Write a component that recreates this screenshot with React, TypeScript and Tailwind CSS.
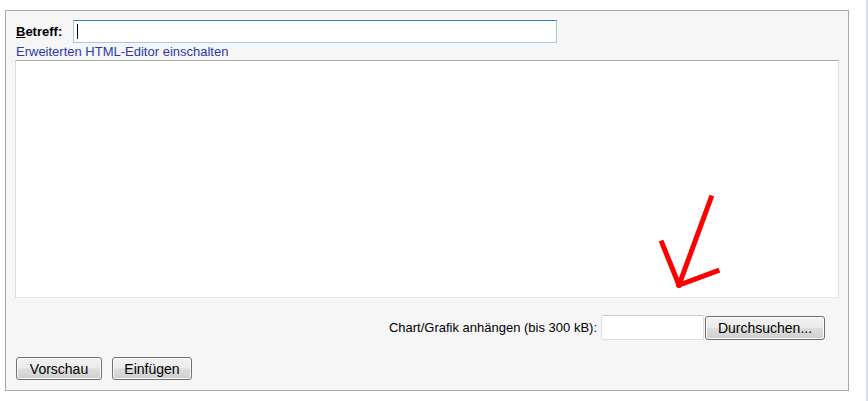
import type { ReactNode } from "react";

const font = { fontFamily: '"Liberation Sans", Arial, sans-serif' };

function WinButton({ children, className = "" }: { children: ReactNode; className?: string }) {
  return (
    <button
      type="button"
      className={`flex items-center justify-center rounded-[3px] border border-[#707070] bg-[linear-gradient(to_bottom,#f2f2f2_0%,#ebebeb_48%,#dddddd_52%,#cfcfcf_100%)] text-[14px] leading-none text-black shadow-[inset_0_0_0_1px_#fcfcfc] ${className}`}
    >
      {children}
    </button>
  );
}

export default function App() {
  return (
    <div className="relative flex h-[401px] w-[868px] bg-white text-[13px] text-black" style={font}>
      <div className="w-[866px] pl-[5px] pt-[10px]">
        <div className="flex h-[381px] w-[844px] flex-col border border-[#a9a9a9] bg-[#f6f6f6] pl-[9px]">
          {/* subject line */}
          <div className="mt-[9px] flex items-center">
            <label className="w-[58px] pl-[1px] text-[13px] font-bold">
              <span className="underline">B</span>etreff:
            </label>
            <div className="relative h-[23px] w-[484px] border border-[#a4c9e3] border-t-[#3d7bad] bg-white">
              <span className="absolute left-[3px] top-[3px] h-[15px] w-px bg-black" />
            </div>
          </div>
          <a className="mt-px pl-[1px] text-[13px] leading-[15px] text-[#2b3ca8]">Erweiterten HTML-Editor einschalten</a>

          {/* message body */}
          <div className="mt-px h-[238px] w-[824px] border border-[#dbdfe6] border-t-[#abadb3] border-b-[#e3e9ef] bg-white" />

          {/* attachment */}
          <div className="mt-[17px] flex w-[810px] items-center justify-end">
            <span className="mr-[4px]">Chart/Grafik anhängen (bis 300 kB):</span>
            <div className="h-[25px] w-[103px] rounded-[2px] border border-[#dbdfe6] border-t-[#c8cbd1] bg-white" />
            <WinButton className="ml-[1px] h-[24px] w-[120px]">Durchsuchen...</WinButton>
          </div>

          {/* actions */}
          <div className="mt-[17px] flex gap-[10px] pl-[1px]">
            <WinButton className="h-[23px] w-[86px]">Vorschau</WinButton>
            <WinButton className="h-[23px] w-[80px]">Einfügen</WinButton>
          </div>
        </div>
      </div>
      <div className="w-[2px] bg-[#dde1f6]" />

      {/* hand-drawn arrow */}
      <svg className="pointer-events-none absolute left-0 top-0" width="868" height="401" viewBox="0 0 868 401">
        <g fill="none" stroke="#ff0000" strokeWidth="5" strokeLinecap="square" strokeLinejoin="miter">
          <polyline points="711,198 679,285" />
          <polyline points="662,243 679,285 717,271" />
        </g>
      </svg>
    </div>
  );
}
